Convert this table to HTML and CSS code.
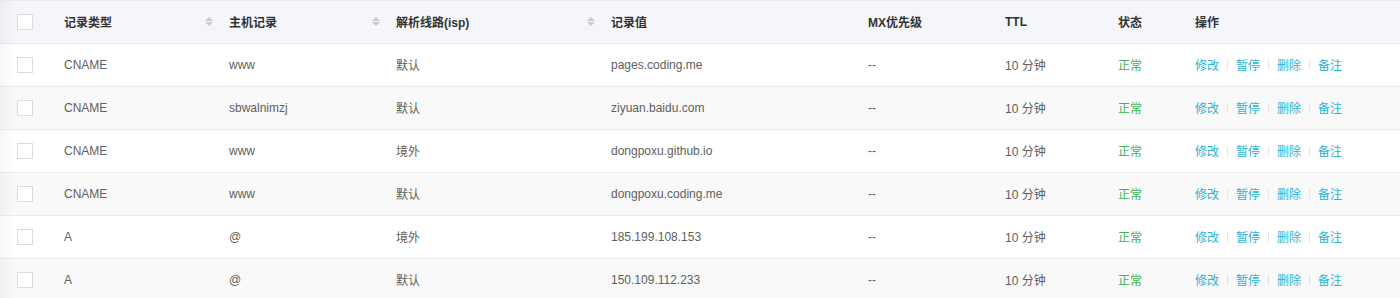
FILE: index.html
```html
<!DOCTYPE html>
<html lang="zh-CN">
<head>
<meta charset="utf-8">
<link rel="stylesheet" href="styles.css">
</head>
<body>
<div class="wrap">
  <table class="grid">
    <colgroup>
      <col class="c0"><col class="c1"><col class="c2"><col class="c3"><col class="c4"><col class="c5"><col class="c6"><col class="c7"><col class="c8">
    </colgroup>
    <thead>
      <tr>
        <th class="chk"><span class="box"></span></th>
        <th><div class="sorth"><span>记录类型</span><span class="sort"><i class="up"></i><i class="down"></i></span></div></th>
        <th><div class="sorth"><span>主机记录</span><span class="sort"><i class="up"></i><i class="down"></i></span></div></th>
        <th><div class="sorth"><span>解析线路(isp)</span><span class="sort"><i class="up"></i><i class="down"></i></span></div></th>
        <th>记录值</th>
        <th>MX优先级</th>
        <th>TTL</th>
        <th>状态</th>
        <th>操作</th>
      </tr>
    </thead>
    <tbody>
      <tr>
        <td class="chk"><span class="box"></span></td>
        <td>CNAME</td><td>www</td><td>默认</td><td>pages.coding.me</td><td>--</td><td>10 分钟</td><td class="ok">正常</td>
        <td><div class="ops"><a>修改</a><i class="sep"></i><a>暂停</a><i class="sep"></i><a>删除</a><i class="sep"></i><a>备注</a></div></td>
      </tr>
      <tr>
        <td class="chk"><span class="box"></span></td>
        <td>CNAME</td><td>sbwalnimzj</td><td>默认</td><td>ziyuan.baidu.com</td><td>--</td><td>10 分钟</td><td class="ok">正常</td>
        <td><div class="ops"><a>修改</a><i class="sep"></i><a>暂停</a><i class="sep"></i><a>删除</a><i class="sep"></i><a>备注</a></div></td>
      </tr>
      <tr>
        <td class="chk"><span class="box"></span></td>
        <td>CNAME</td><td>www</td><td>境外</td><td>dongpoxu.github.io</td><td>--</td><td>10 分钟</td><td class="ok">正常</td>
        <td><div class="ops"><a>修改</a><i class="sep"></i><a>暂停</a><i class="sep"></i><a>删除</a><i class="sep"></i><a>备注</a></div></td>
      </tr>
      <tr>
        <td class="chk"><span class="box"></span></td>
        <td>CNAME</td><td>www</td><td>默认</td><td>dongpoxu.coding.me</td><td>--</td><td>10 分钟</td><td class="ok">正常</td>
        <td><div class="ops"><a>修改</a><i class="sep"></i><a>暂停</a><i class="sep"></i><a>删除</a><i class="sep"></i><a>备注</a></div></td>
      </tr>
      <tr>
        <td class="chk"><span class="box"></span></td>
        <td>A</td><td>@</td><td>境外</td><td>185.199.108.153</td><td>--</td><td>10 分钟</td><td class="ok">正常</td>
        <td><div class="ops"><a>修改</a><i class="sep"></i><a>暂停</a><i class="sep"></i><a>删除</a><i class="sep"></i><a>备注</a></div></td>
      </tr>
      <tr>
        <td class="chk"><span class="box"></span></td>
        <td>A</td><td>@</td><td>默认</td><td>150.109.112.233</td><td>--</td><td>10 分钟</td><td class="ok">正常</td>
        <td><div class="ops"><a>修改</a><i class="sep"></i><a>暂停</a><i class="sep"></i><a>删除</a><i class="sep"></i><a>备注</a></div></td>
      </tr>
    </tbody>
  </table>
  <div class="shade"></div>
</div>
</body>
</html>
```
FILE: styles.css
```css
html, body {
  margin: 0;
  padding: 0;
  background: #fff;
}
body {
  font-family: "Liberation Sans", "Noto Sans CJK SC", sans-serif;
  font-size: 12px;
  color: #606060;
  overflow: hidden;
}
.wrap {
  position: relative;
  width: 1400px;
  border-top: 1px solid #e9eaee;
}
.grid {
  width: 1400px;
  border-collapse: collapse;
  table-layout: fixed;
}
.c0 { width: 48px; }
.c1 { width: 165px; }
.c2 { width: 167px; }
.c3 { width: 215px; }
.c4 { width: 257px; }
.c5 { width: 137px; }
.c6 { width: 113px; }
.c7 { width: 77px; }
.c8 { width: 221px; }

th, td {
  padding: 0 0 0 16px;
  text-align: left;
  white-space: nowrap;
  vertical-align: middle;
}
thead tr {
  height: 42px;
  background: #f5f6fb;
  border-bottom: 1px solid #e8e9ee;
}
th {
  font-weight: bold;
  color: #333;
}
tbody tr {
  height: 43px;
  border-bottom: 1px solid #ebecef;
}
tbody tr:nth-child(even) {
  background: #f9f9fa;
}
tbody tr:last-child {
  border-bottom: none;
}
th.chk, td.chk {
  padding-left: 17px;
}
.box {
  display: block;
  width: 14px;
  height: 14px;
  border: 1px solid #dcdcdf;
  background: #fff;
}
.sorth {
  display: flex;
  align-items: center;
  justify-content: space-between;
}
.sort {
  display: flex;
  flex-direction: column;
  gap: 1px;
  width: 8px;
}
.sort i {
  display: block;
  width: 0;
  height: 0;
  border-left: 4px solid transparent;
  border-right: 4px solid transparent;
}
.sort .up {
  border-bottom: 4px solid #c8cacf;
}
.sort .down {
  border-top: 4px solid #c8cacf;
}
.ok {
  color: #43b25a;
}
.ops {
  display: flex;
  align-items: center;
}
.ops a {
  color: #2bb3d6;
}
.sep {
  display: block;
  width: 1px;
  height: 10px;
  background: #e4e5e8;
  margin: 0 8px;
}
.shade {
  position: absolute;
  left: 0;
  top: 0;
  bottom: 0;
  width: 14px;
  background: linear-gradient(to right, rgba(0,0,0,0.035), rgba(0,0,0,0));
  pointer-events: none;
}
```
